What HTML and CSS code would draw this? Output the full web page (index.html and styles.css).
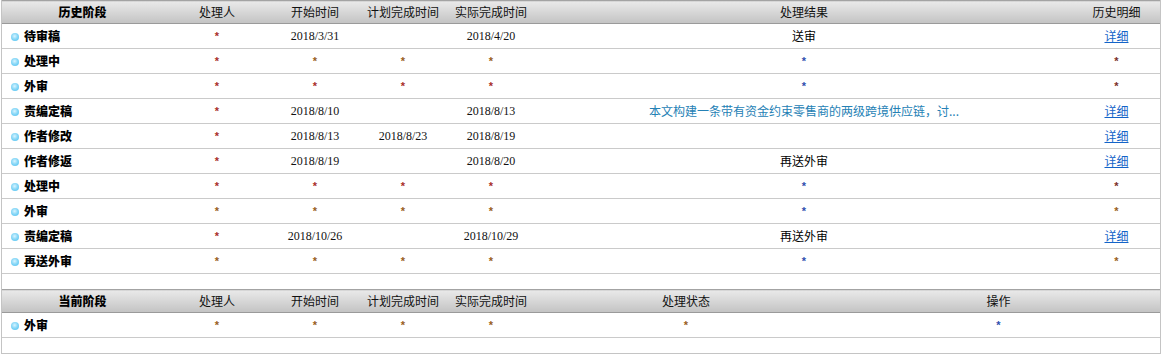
FILE: index.html
```html
<!DOCTYPE html>
<html lang="zh-CN">
<head>
<meta charset="utf-8">
<title>稿件处理历史</title>
<link rel="stylesheet" href="styles.css">
</head>
<body>
<div class="wrap">
  <table class="grid">
    <colgroup>
      <col class="c1"><col class="c2"><col class="c3"><col class="c4"><col class="c5"><col class="c6a"><col class="c7a">
    </colgroup>
    <thead>
      <tr class="head">
        <th class="stage-h">历史阶段</th><th>处理人</th><th>开始时间</th><th>计划完成时间</th><th>实际完成时间</th><th>处理结果</th><th>历史明细</th>
      </tr>
    </thead>
    <tbody>
      <tr><td class="stage"><span class="dot"></span>待审稿</td><td><span class="ast a1">*</span></td><td class="date">2018/3/31</td><td></td><td class="date">2018/4/20</td><td class="res">送审</td><td><a class="link" href="#">详细</a></td></tr>
      <tr><td class="stage"><span class="dot"></span>处理中</td><td><span class="ast a1">*</span></td><td><span class="ast a2">*</span></td><td><span class="ast a2">*</span></td><td><span class="ast a2">*</span></td><td><span class="ast a6">*</span></td><td><span class="ast a7">*</span></td></tr>
      <tr><td class="stage"><span class="dot"></span>外审</td><td><span class="ast a1">*</span></td><td><span class="ast a1">*</span></td><td><span class="ast a1">*</span></td><td><span class="ast a1">*</span></td><td><span class="ast a6">*</span></td><td><span class="ast a7">*</span></td></tr>
      <tr><td class="stage"><span class="dot"></span>责编定稿</td><td><span class="ast a1">*</span></td><td class="date">2018/8/10</td><td></td><td class="date">2018/8/13</td><td class="res note">本文构建一条带有资金约束零售商的两级跨境供应链，讨...</td><td><a class="link" href="#">详细</a></td></tr>
      <tr><td class="stage"><span class="dot"></span>作者修改</td><td><span class="ast a1">*</span></td><td class="date">2018/8/13</td><td class="date">2018/8/23</td><td class="date">2018/8/19</td><td></td><td><a class="link" href="#">详细</a></td></tr>
      <tr><td class="stage"><span class="dot"></span>作者修返</td><td><span class="ast a1">*</span></td><td class="date">2018/8/19</td><td></td><td class="date">2018/8/20</td><td class="res">再送外审</td><td><a class="link" href="#">详细</a></td></tr>
      <tr><td class="stage"><span class="dot"></span>处理中</td><td><span class="ast a1">*</span></td><td><span class="ast a1">*</span></td><td><span class="ast a1">*</span></td><td><span class="ast a1">*</span></td><td><span class="ast a6">*</span></td><td><span class="ast a7">*</span></td></tr>
      <tr><td class="stage"><span class="dot"></span>外审</td><td><span class="ast a2">*</span></td><td><span class="ast a2">*</span></td><td><span class="ast a2">*</span></td><td><span class="ast a2">*</span></td><td><span class="ast a6">*</span></td><td><span class="ast a2">*</span></td></tr>
      <tr><td class="stage"><span class="dot"></span>责编定稿</td><td><span class="ast a1">*</span></td><td class="date">2018/10/26</td><td></td><td class="date">2018/10/29</td><td class="res">再送外审</td><td><a class="link" href="#">详细</a></td></tr>
      <tr><td class="stage"><span class="dot"></span>再送外审</td><td><span class="ast a2">*</span></td><td><span class="ast a2">*</span></td><td><span class="ast a2">*</span></td><td><span class="ast a2">*</span></td><td><span class="ast a6">*</span></td><td><span class="ast a2">*</span></td></tr>
      <tr class="blank"><td colspan="7"></td></tr>
    </tbody>
  </table>

  <table class="grid">
    <colgroup>
      <col class="c1"><col class="c2"><col class="c3"><col class="c4"><col class="c5"><col class="c6b"><col class="c7b">
    </colgroup>
    <thead>
      <tr class="head">
        <th class="stage-h">当前阶段</th><th>处理人</th><th>开始时间</th><th>计划完成时间</th><th>实际完成时间</th><th>处理状态</th><th>操作</th>
      </tr>
    </thead>
    <tbody>
      <tr><td class="stage"><span class="dot"></span>外审</td><td><span class="ast a2">*</span></td><td><span class="ast a2">*</span></td><td><span class="ast a2">*</span></td><td><span class="ast a2">*</span></td><td><span class="ast a2">*</span></td><td><span class="ast a6">*</span></td></tr>
      <tr class="blank last"><td colspan="7"></td></tr>
    </tbody>
  </table>
</div>
</body>
</html>
```

FILE: styles.css
```css
html, body {
  margin: 0;
  padding: 0;
  background: #ffffff;
}

body {
  font-family: "Noto Sans CJK SC", "Liberation Sans", sans-serif;
  font-size: 12px;
  color: #000;
}

.wrap {
  margin-left: 1px;
  width: 1160px;
  border-left: 1px solid #c4c4c4;
  border-right: 1px solid #c4c4c4;
  box-sizing: border-box;
}

.grid {
  width: 100%;
  table-layout: fixed;
  border-collapse: collapse;
}

.c1 { width: 161px; }
.c2 { width: 108px; }
.c3 { width: 88px; }
.c4 { width: 88px; }
.c5 { width: 88px; }
.c6a { width: 538px; }
.c7a { width: auto; }
.c6b { width: 302px; }
.c7b { width: auto; }

.head th {
  height: 22px;
  padding: 0;
  font-weight: normal;
  font-size: 12px;
  color: #111;
  text-align: center;
  vertical-align: middle;
  line-height: 22px;
  background: linear-gradient(to bottom, #e9e9e9 0%, #d6d6d6 50%, #c3c3c3 100%);
  border-top: 1px solid #a3a3a3;
  border-bottom: 1px solid #9a9a9a;
  white-space: nowrap;
}

.head th.stage-h {
  font-weight: 900;
  color: #000;
}

.grid td {
  height: 24px;
  padding: 0;
  text-align: center;
  vertical-align: middle;
  line-height: 24px;
  border-bottom: 1px solid #cacaca;
  white-space: nowrap;
  overflow: hidden;
}

.grid td.stage {
  text-align: left;
  font-weight: 900;
  padding-left: 9px;
}

.dot {
  display: inline-block;
  width: 8px;
  height: 8px;
  border-radius: 50%;
  background: radial-gradient(circle at 45% 40%, #d8f4ff 0%, #8ad8f7 45%, #45bdf0 100%);
  vertical-align: middle;
  margin-right: 5px;
  position: relative;
  top: -1px;
}

.date {
  font-family: "Liberation Serif", serif;
  font-size: 12px;
  color: #111;
}

.res {
  font-size: 12px;
  color: #000;
}

.res.note {
  color: #2581b5;
}

.link {
  color: #1464c8;
  text-decoration: underline;
}

.ast {
  display: inline-block;
  font-family: "Liberation Sans", sans-serif;
  font-size: 11px;
  font-weight: bold;
  line-height: 11px;
  vertical-align: middle;
  position: relative;
  top: -1px;
}

.a1 { color: #a8302a; }
.a2 { color: #98601c; }
.a6 { color: #2f4fae; }
.a7 { color: #7a302a; }

.grid tr.blank td {
  height: 15px;
  line-height: 15px;
  border-bottom: none;
}

.grid tr.blank.last td {
  border-bottom: 1px solid #c4c4c4;
}
```
